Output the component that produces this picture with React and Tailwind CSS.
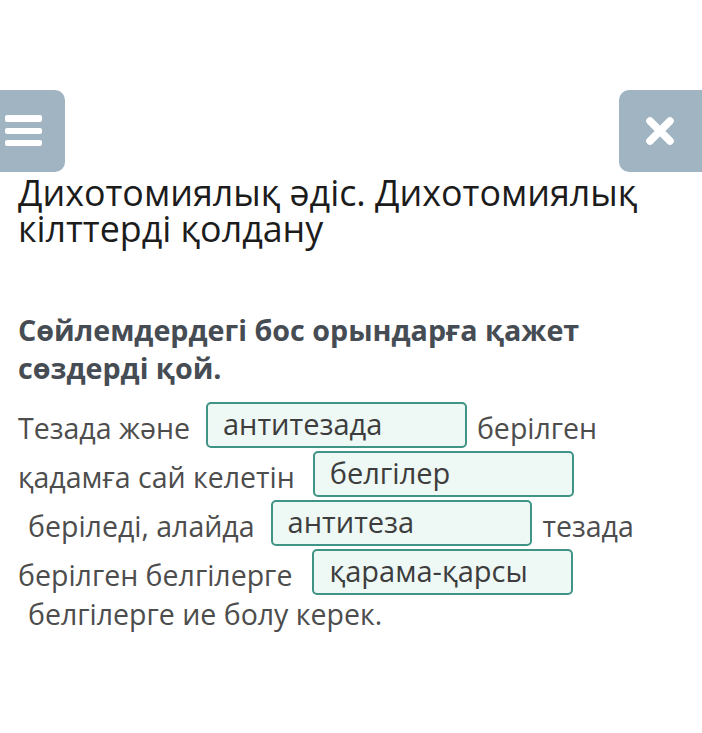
import React from "react";

// one blank filled in with the picked word
const Blank = ({ word, className = "" }) => (
  <div
    className={`w-[261px] h-[46px] shrink-0 rounded-[5px] border-2 border-[#3f9485] bg-[#eef8f4] pl-[15px] text-[#3d3d3d] text-[29px] leading-[39px] ${className}`}
  >
    {word}
  </div>
);

const App = () => {
  return (
    <div
      className="min-h-screen w-[702px] bg-white overflow-hidden"
      style={{ fontFamily: '"Open Sans", "Noto Sans", sans-serif' }}
    >
      {/* top bar */}
      <div className="mt-[90px] flex items-start justify-between">
        <button className="w-[65px] h-[82px] bg-[#a0b4c1] rounded-r-[10px] flex flex-col gap-[6px] pl-[5px] pt-[25px]">
          <span className="block w-[37px] h-[7px] rounded-[2px] bg-white" />
          <span className="block w-[37px] h-[6px] rounded-[2px] bg-white" />
          <span className="block w-[37px] h-[6px] rounded-[2px] bg-white" />
        </button>
        <button className="w-[83px] h-[82px] bg-[#a0b4c1] rounded-l-[10px] flex items-center justify-center pr-[2px]">
          <svg width="30" height="30" viewBox="0 0 30 30">
            <path
              d="M5 5 L25 25 M25 5 L5 25"
              stroke="white"
              strokeWidth="7.5"
              strokeLinecap="round"
            />
          </svg>
        </button>
      </div>

      {/* lesson title */}
      <div className="pl-[18px] pr-[40px] mt-[2px]">
        <h1 className="text-[35.8px] leading-[36px] font-normal text-[#1c1c1c]">
          Дихотомиялық әдіс. Дихотомиялық кілттерді қолдану
        </h1>

        <h2 className="mt-[65px] text-[28.7px] leading-[38px] font-bold text-[#464c53]">
          Сөйлемдердегі бос орындарға қажет сөздерді қой.
        </h2>

        {/* fill in the blanks */}
        <div className="mt-[15px] flex flex-col gap-[3px] text-[28.5px] text-[#4d4d4d]">
          <div className="flex items-start h-[46px] leading-[40px]">
            <span className="pt-[6px]">Тезада және</span>
            <Blank word="антитезада" className="ml-[16px]" />
            <span className="pt-[6px] ml-[10px]">берілген</span>
          </div>
          <div className="flex items-start h-[46px] leading-[40px]">
            <span className="pt-[6px]">қадамға сай келетін</span>
            <Blank word="белгілер" className="ml-[18px]" />
          </div>
          <div className="flex items-start h-[46px] leading-[40px]">
            <span className="pt-[6px] pl-[10px]">беріледі, алайда</span>
            <Blank word="антитеза" className="ml-[16px]" />
            <span className="pt-[6px] ml-[11px]">тезада</span>
          </div>
          <div className="flex items-start h-[46px] leading-[40px]">
            <span className="pt-[6px]">берілген белгілерге</span>
            <Blank word="қарама-қарсы" className="ml-[20px]" />
          </div>
          <div className="leading-[40px] pl-[10px] -mt-[4px]">
            белгілерге ие болу керек.
          </div>
        </div>
      </div>
    </div>
  );
};

export default App;
